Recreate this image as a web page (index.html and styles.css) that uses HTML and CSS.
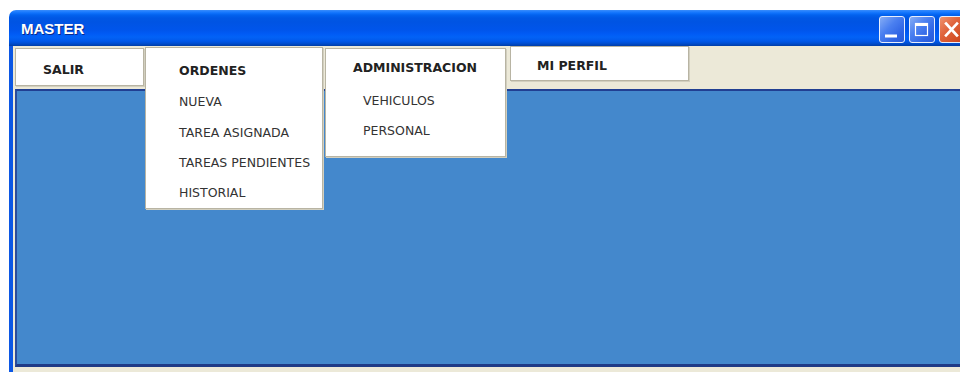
FILE: index.html
```html
<!DOCTYPE html>
<html lang="es">
<head>
<meta charset="utf-8">
<title>MASTER</title>
<link rel="stylesheet" href="styles.css">
</head>
<body>
<div class="window">
  <div class="titlebar">
    <span class="title">MASTER</span>
    <div class="controls">
      <button class="ctl ctl-min" aria-label="Minimizar"><svg viewBox="0 0 24 25" width="24" height="25"><rect x="5" y="17.5" width="12" height="3" fill="#fff"/></svg></button>
      <button class="ctl ctl-max" aria-label="Maximizar"><svg viewBox="0 0 24 25" width="24" height="25"><rect x="5.5" y="6.5" width="12" height="12" fill="none" stroke="#fff" stroke-width="1.2"/><rect x="5" y="6" width="13" height="3" fill="#fff"/></svg></button>
      <button class="ctl ctl-close" aria-label="Cerrar"><svg viewBox="0 0 24 25" width="24" height="25"><path d="M6 6.5 L17 18.5 M17 6.5 L6 18.5" stroke="#fff" stroke-width="2.6" stroke-linecap="square"/></svg></button>
    </div>
  </div>
  <div class="frame">
    <nav class="menubar">
      <div class="menu menu-salir"><div class="menu-head">SALIR</div></div>
      <div class="menu menu-ordenes">
        <div class="menu-head">ORDENES</div>
        <ul class="menu-list">
          <li class="first">NUEVA</li>
          <li>TAREA ASIGNADA</li>
          <li>TAREAS PENDIENTES</li>
          <li>HISTORIAL</li>
        </ul>
      </div>
      <div class="menu menu-admin">
        <div class="menu-head">ADMINISTRACION</div>
        <ul class="menu-list">
          <li>VEHICULOS</li>
          <li>PERSONAL</li>
        </ul>
      </div>
      <div class="menu menu-perfil"><div class="menu-head">MI PERFIL</div></div>
    </nav>
    <div class="content"></div>
  </div>
</div>
</body>
</html>
```
FILE: styles.css
```css
html, body {
  margin: 0;
  padding: 0;
}
body {
  background: #ffffff;
  width: 960px;
  height: 372px;
  overflow: hidden;
  font-family: "DejaVu Sans", sans-serif;
}
.window {
  margin: 10px 0 0 9px;
  width: 959px;
}
.titlebar {
  height: 36px;
  display: flex;
  justify-content: space-between;
  align-items: flex-start;
  border-radius: 7px 7px 0 0;
  background: linear-gradient(to bottom,
    #3a8cf8 0px, #2a84ff 1px, #0f72fc 3px, #0262ee 5px, #0057e5 8px,
    #0054e3 12px, #0055eb 20px, #005bf5 24px, #0262f7 27px,
    #0058ea 31px, #0050d6 33px, #0044b8 35px, #003da6 36px);
}
.title {
  font: bold 15px/18px "Liberation Sans", sans-serif;
  color: #fff;
  text-shadow: 1px 1px 0 #0a2a8a;
  padding: 10px 0 0 12px;
}
.controls {
  display: flex;
  gap: 4px;
  padding: 6px 3px 0 0;
}
.ctl {
  width: 26px;
  height: 27px;
  box-sizing: border-box;
  border: 1px solid #e8eefc;
  border-radius: 3px;
  padding: 0;
  margin: 0;
  display: block;
}
.ctl svg {
  display: block;
}
.ctl-min, .ctl-max {
  background: linear-gradient(135deg, #86adf5 0%, #4a7ff0 40%, #2f64e4 75%, #2a5ad8 100%);
}
.ctl-close {
  background: linear-gradient(135deg, #f0936e 0%, #e0653d 40%, #d34d24 80%, #c8431d 100%);
}
.frame {
  border-left: 4px solid #0c57e4;
  background: #ece9d8;
  padding-left: 2px;
  height: 330px;
}
.menubar {
  height: 43px;
  display: flex;
  align-items: flex-start;
  position: relative;
  z-index: 2;
}
.menu {
  background: #fff;
  border: 1px solid #b8b4a3;
  box-shadow: 1px 1px 0 #d2cfbf;
  box-sizing: border-box;
  flex: none;
}
.menu-head {
  font-weight: bold;
  font-size: 12.5px;
  color: #222;
  white-space: nowrap;
}
.menu-list {
  list-style: none;
  margin: 0;
  padding: 0;
  font-size: 12.5px;
  color: #333;
  white-space: nowrap;
}
.menu-salir {
  width: 129px;
  height: 38px;
  margin-top: 2px;
  padding: 11px 0 0 27px;
}
.menu-salir .menu-head { line-height: 20px; }
.menu-ordenes {
  width: 178px;
  height: 162px;
  margin: 1px 0 0 1px;
  padding: 7px 0 0 33px;
}
.menu-ordenes .menu-head { line-height: 31px; }
.menu-ordenes .menu-list li { line-height: 30px; }
.menu-ordenes .menu-list li.first { line-height: 32px; }
.menu-admin {
  width: 181px;
  height: 109px;
  margin: 2px 0 0 2px;
  padding: 0 0 0 27px;
}
.menu-admin .menu-head { line-height: 37px; }
.menu-admin .menu-list { padding-left: 10px; }
.menu-admin .menu-list li { line-height: 30px; }
.menu-perfil {
  width: 179px;
  height: 35px;
  margin: 0 0 0 4px;
  padding: 9px 0 0 26px;
}
.menu-perfil .menu-head { line-height: 20px; }
.content {
  height: 273px;
  border-top: 2px solid #213f92;
  border-left: 2px solid #2a4c9c;
  border-bottom: 3px solid #1f3a86;
  background: #4488cc;
}
```
